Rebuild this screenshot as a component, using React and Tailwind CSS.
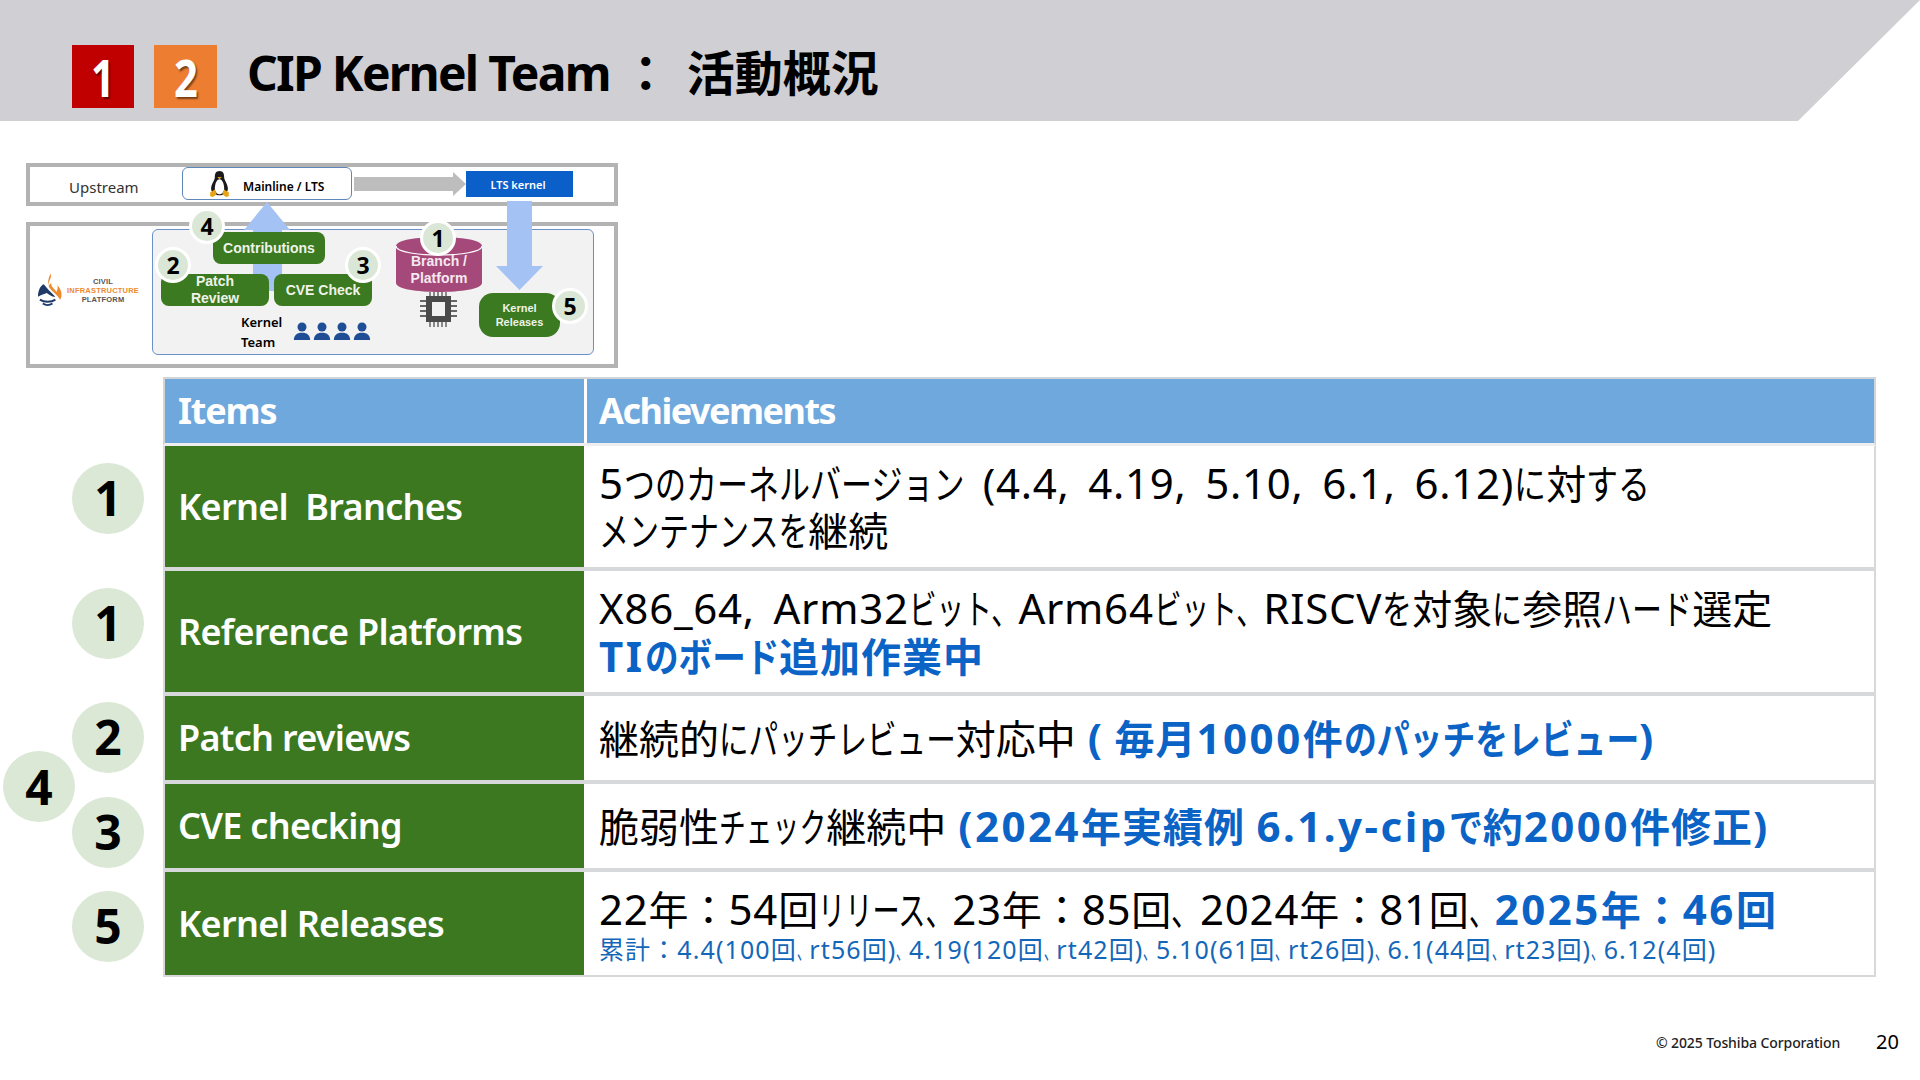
const SANS = "font-['Noto_Sans','Noto_Sans_CJK_JP',sans-serif]";

const rows = [
  { h: 'h-[125px]', label: 'Kernel  Branches', num: '1', shift: 'mb-[21px]', border: 'border-b-[4px]' },
  { h: 'h-[125px]', label: 'Reference Platforms', num: '1', shift: 'mb-[21px]', border: 'border-b-[4px]' },
  { h: 'h-[88px]', label: 'Patch reviews', num: '2', shift: 'mb-[6px]', border: 'border-b-[4px]' },
  { h: 'h-[88px]', label: 'CVE checking', num: '3', shift: 'mt-[8px]', border: 'border-b-[4px]' },
  { h: 'h-[105px]', label: 'Kernel Releases', num: '5', shift: 'mt-[3px]', border: 'border-b-[2px]' },
];

// Latin runs are a touch larger with wide word gaps
const L = ({ children }) => <span className="text-[42px] tracking-[0.75px] [word-spacing:7px]">{children}</span>;
const BL = ({ children }) => <span className="text-[42px] tracking-[2.5px]">{children}</span>;

// the slide font sets kana narrow: squeeze the run and pull back the space it frees
const K = ({ children, s = 0.75, size = 40 }) => {
  const n = Array.from(children).length;
  return (
    <span
      className="inline-block origin-left whitespace-pre tracking-normal"
      style={{ transform: `scaleX(${s})`, marginRight: -n * size * (1 - s) }}
    >
      {children}
    </span>
  );
};

const Blue = ({ children }) => <span className="font-bold tracking-[1px] text-[#0b63c5]">{children}</span>;

const Comma = () => <K s={0.5} size={25}>、</K>;

const achievements = [
  <div className="text-[40px] leading-[47px]">
    <div><L>5</L><K s={0.775}>つのカーネルバージョン</K><L> (4.4, 4.19, 5.10, 6.1, 6.12)</L><K s={0.8}>に</K>対<K s={0.8}>する</K></div>
    <div><K>メンテナンスを</K>継続</div>
  </div>,
  <div className="text-[40px] leading-[47px]">
    <div><L>X86_64, Arm32</L><K s={0.69}>ビット、</K><L>Arm64</L><K s={0.69}>ビット、</K><L>RISCV</L><K>を</K>対象<K>に</K>参照<K>ハード</K>選定</div>
    <div><Blue><BL>TI</BL><K s={0.84}>のボード</K>追加作業中</Blue></div>
  </div>,
  <div className="text-[40px] leading-[47px]">
    継続的<K s={0.74}>にパッチレビュー</K>対応中
    <span className="ml-[12px]"><Blue><BL>(</BL><span className="ml-[10px]">毎月</span><BL>1000</BL>件<K s={0.82}>のパッチをレビュー</K><BL>)</BL></Blue></span>
  </div>,
  <div className="text-[40px] leading-[47px]">
    脆弱性<K s={0.67}>チェック</K>継続中
    <span className="ml-[12px]"><Blue><BL>(2024</BL>年実績例 <BL>6.1.y-cip</BL><K s={0.85}>で</K>約<BL>2000</BL>件修正<BL>)</BL></Blue></span>
  </div>,
  <div className="pt-[3px]">
    <div className="text-[40px] leading-[44px]">
      <L>22</L>年：<L>54</L>回<K s={0.68}>リリース、</K><L>23</L>年：<L>85</L>回<K s={0.72}>、</K><L>2024</L>年：<L>81</L>回<K s={0.65}>、</K>
      <Blue><BL>2025</BL>年：<BL>46</BL>回</Blue>
    </div>
    <div className="mt-[3px] text-[25px] leading-[28px] tracking-[1.100px] text-[#1467b8]">
      累計：4.4(100回<Comma />rt56回)<Comma />4.19(120回<Comma />rt42回)<Comma />5.10(61回<Comma />rt26回)<Comma />6.1(44回<Comma />rt23回)<Comma />6.12(4回)
    </div>
  </div>,
];

const Circle = ({ n, className = '' }) => (
  <div className={`flex h-[71px] w-[72px] items-center justify-center rounded-full bg-[#dbe8d6] text-[48px] font-bold text-black ${className}`}>
    {n}
  </div>
);

const Badge = ({ n, className }) => (
  <div className={`absolute flex h-[36px] w-[36px] items-center justify-center rounded-full border-[3px] border-white bg-[#dbe7d6] text-[23px] font-bold text-black ${className}`}>
    {n}
  </div>
);

const GreenNode = ({ className, children }) => (
  <div className={`absolute flex items-center justify-center bg-[#3b7a20] text-center font-['Liberation_Sans',sans-serif] font-bold text-[#eef3ea] ${className}`}>
    {children}
  </div>
);

const Penguin = () => (
  <svg viewBox="0 0 24 30" className="h-[28px] w-[23px]">
    <path d="M12 1c-4 0-5 3-5 7 0 3-4 7-4 12 0 4 4 7 9 7s9-3 9-7c0-5-4-9-4-12 0-4-1-7-5-7z" fill="#1a1a1a" />
    <path d="M12 10c-3 0-5 5-5 10 0 3 2 6 5 6s5-3 5-6c0-5-2-10-5-10z" fill="#fff" />
    <path d="M9.500 7.500h5L12 10z" fill="#e8a317" />
    <path d="M2 24l5-3 2 5-4 3-3-1zM22 24l-5-3-2 5 4 3 3-1z" fill="#e8a317" />
  </svg>
);

const Person = () => (
  <svg viewBox="0 0 20 20" className="h-[18px] w-[18px]">
    <circle cx="10" cy="5.500" r="5" fill="#1f4e96" />
    <path d="M1 20c0-5 3-8 9-8s9 3 9 8z" fill="#1f4e96" />
  </svg>
);

const Chip = () => (
  <svg viewBox="0 0 37 35" className="h-[35px] w-[37px]">
    <path d="M10 0v35M14 0v35M18 0v35M22 0v35M26 0v35" stroke="#666" strokeWidth="1.500" />
    <path d="M0 9h37M0 14h37M0 19h37M0 24h37" stroke="#666" strokeWidth="2" />
    <rect x="6" y="4" width="25" height="26" fill="#4a4a4a" />
    <rect x="12" y="10" width="13" height="14" fill="#f2f2f2" />
  </svg>
);

const CipLogo = () => (
  <div className="absolute left-[12px] top-[110px] flex items-center gap-[1px]">
    <svg viewBox="0 0 28 34" className="h-[34px] w-[27px]">
      <path d="M13 0c2 5-3 8-2 13 1-2 2-3 3-3-1 4 3 5 5 9 1-2 2-5 1-7 4 4 6 10 3 15-3-5-7-7-11-12C9 10 11 5 13 0z" fill="#ee8a2e" />
      <path d="M0 24c0-7 3-12 6-13l5 6 7 7c-4 0-7-3-9-4-2 1-6 2-9 4z" fill="#1f3a68" />
      <path d="M2 27c4 3 12 3 16 0M5 31c3 2 7 2 10 0" stroke="#1f3a68" strokeWidth="2" fill="none" />
    </svg>
    <div className="w-[74px] text-center font-['Liberation_Sans',sans-serif] text-[7.500px] font-bold leading-[9px] tracking-[0.2px] text-[#555]">
      <div>CIVIL</div>
      <div className="text-[#ee8a2e]">INFRASTRUCTURE</div>
      <div>PLATFORM</div>
    </div>
  </div>
);

const Diagram = () => (
  <div className="relative ml-[26px] mt-[42px] flex h-[205px] w-[592px] flex-col gap-[16px] text-black">
    <div className="h-[43px] border-[4px] border-[#b3b3b3] bg-white" />
    <div className="h-[146px] border-[4px] border-[#b3b3b3] bg-white" />

    <div className="absolute left-[43px] top-[15px] text-[15px] leading-[18px] text-[#333]">Upstream</div>
    <div className="absolute left-[156px] top-[4px] flex h-[33px] w-[170px] items-center gap-[12px] rounded-[6px] border border-[#5f86b8] bg-white pl-[25px]">
      <Penguin />
      <span className="pt-[6px] text-[12px] font-semibold">Mainline / LTS</span>
    </div>
    <svg viewBox="0 0 112 24" className="absolute left-[328px] top-[9px] h-[24px] w-[112px]">
      <path d="M0 5h99V0l13 12-13 12v-5H0z" fill="#bdbdbd" />
    </svg>
    <div className="absolute left-[440px] top-[8px] flex h-[26px] w-[107px] items-center justify-center bg-[#0b5fc9] pt-[3px] pr-[3px] text-[11px] font-semibold text-white">
      LTS kernel
    </div>

    <CipLogo />
    <div className="absolute left-[126px] top-[66px] h-[126px] w-[442px] rounded-[6px] border border-[#6a90c8] bg-[#f2f2f2]" />

    <svg viewBox="0 0 46 89" className="absolute left-[218px] top-[39px] h-[89px] w-[46px]">
      <path d="M23 0l23 28H38v61H9V28H0z" fill="#a4c2f4" />
    </svg>
    <svg viewBox="0 0 47 89" className="absolute left-[470px] top-[38px] h-[89px] w-[47px]">
      <path d="M11 0h25v65h11L23.500 89 0 65h11z" fill="#a4c2f4" />
    </svg>

    <GreenNode className="left-[187px] top-[69px] h-[32px] w-[112px] rounded-[8px] text-[14px]">Contributions</GreenNode>
    <GreenNode className="left-[135px] top-[111px] h-[32px] w-[108px] rounded-[8px] text-[14px] leading-[17px]">
      Patch<br />Review
    </GreenNode>
    <GreenNode className="left-[248px] top-[111px] h-[32px] w-[98px] rounded-[8px] text-[14px]">CVE Check</GreenNode>
    <GreenNode className="left-[453px] top-[130px] h-[44px] w-[81px] rounded-[14px] text-[11px] leading-[14px]">
      Kernel<br />Releases
    </GreenNode>

    <div className="absolute left-[215px] top-[149px] text-[13px] font-semibold leading-[20px]">
      Kernel<br />Team
    </div>
    <div className="absolute left-[267px] top-[159px] flex gap-[2px]">
      <Person /><Person /><Person /><Person />
    </div>

    <svg viewBox="0 0 86 55" className="absolute left-[370px] top-[74px] h-[55px] w-[86px]">
      <path d="M0 9c0-12 86-12 86 0v37c0 12-86 12-86 0z" fill="#a5497b" />
      <path d="M0 9c0 12 86 12 86 0" fill="none" stroke="#fff" strokeWidth="1.200" />
    </svg>
    <div className="absolute left-[370px] top-[90px] w-[86px] text-center font-['Liberation_Sans',sans-serif] text-[14px] font-bold leading-[17px] text-[#f5e9f0]">
      Branch /<br />Platform
    </div>
    <div className="absolute left-[394px] top-[129px]">
      <Chip />
    </div>

    <Badge n="4" className="left-[163px] top-[45px]" />
    <Badge n="2" className="left-[129px] top-[84px]" />
    <Badge n="3" className="left-[319px] top-[84px]" />
    <Badge n="1" className="left-[394px] top-[57px]" />
    <Badge n="5" className="left-[526px] top-[125px]" />
  </div>
);

export default function App() {
  return (
    <div className={`h-[1080px] w-[1920px] overflow-hidden bg-white ${SANS}`}>
      {/* title band */}
      <div className="flex h-[121px] items-center bg-[#cfcfd4] pl-[72px] pt-[32px] [clip-path:polygon(0_0,100%_0,1798px_100%,0_100%)]">
        <div className="flex h-[63px] w-[62px] items-center justify-center bg-[#c00000] text-[52px] font-bold text-white [text-shadow:2px_2px_2px_rgba(0,0,0,0.5)]">
          <span className="inline-block scale-x-[0.8]">1</span>
        </div>
        <div className="ml-[20px] flex h-[63px] w-[63px] items-center justify-center bg-[#ed7d31] text-[52px] font-bold text-white [text-shadow:2px_2px_2px_rgba(0,0,0,0.5)]">
          <span className="inline-block scale-x-[0.8]">2</span>
        </div>
        <h1 className="mb-[8px] ml-[30px] whitespace-pre text-[48px] font-bold text-black">
          <span className="tracking-[-1.750px]">CIP Kernel Team</span>
          <span className="ml-[12px]">：</span>
          <span className="ml-[17px]">活動概況</span>
        </h1>
      </div>

      <Diagram />

      {/* table */}
      <div className="relative mt-[9px]">
        <div className="flex h-[69px]">
          <div className="w-[163px]" />
          <div className="grid w-[1713px] grid-cols-[419px_1fr] gap-x-[3px] border-x-2 border-b-[3px] border-t-2 border-x-[#d2d5d8] border-t-[#d2d5d8] border-b-[#eeeeee]">
            <div className="flex items-center bg-[#6fa8dc] pl-[13px] text-[36px] font-bold tracking-[-1.200px] text-white">Items</div>
            <div className="flex items-center bg-[#6fa8dc] pl-[12px] text-[36px] font-bold tracking-[-1.500px] text-white">Achievements</div>
          </div>
        </div>
        {rows.map((r, i) => (
          <div key={r.label} className={`flex ${r.h}`}>
            <div className="flex w-[163px] items-center justify-end pr-[19px]">
              <Circle n={r.num} className={r.shift} />
            </div>
            <div className={`grid w-[1713px] grid-cols-[419px_1fr] border-x-2 border-[#d6d8da] ${r.border}`}>
              <div className="flex items-center whitespace-pre bg-[#3b7820] pl-[13px] text-[36px] font-semibold tracking-[-0.700px] text-white">{r.label}</div>
              <div className="flex items-center whitespace-nowrap pl-[15px] text-black">{achievements[i]}</div>
            </div>
          </div>
        ))}
        <Circle n="4" className="absolute left-[3px] top-[374px]" />
      </div>

      {/* footer */}
      <div className="mt-[50px] flex items-center justify-end pr-[21px]">
        <span className="text-[14px] font-medium tracking-[-0.100px] text-[#222]">© 2025 Toshiba Corporation</span>
        <span className="ml-[36px] text-[20px] text-black">20</span>
      </div>
    </div>
  );
}
